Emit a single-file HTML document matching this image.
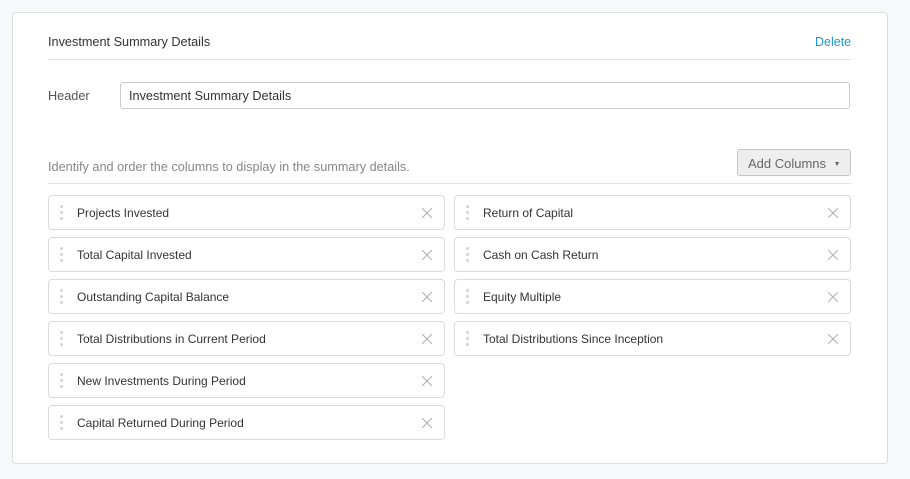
<!DOCTYPE html>
<html><head><style>
*{box-sizing:border-box;margin:0;padding:0}
body{width:910px;height:479px;background:#f7f8fa;font-family:"Liberation Sans",sans-serif;color:#333;position:relative;overflow:hidden}
.card{position:absolute;left:12px;top:12px;width:876px;height:452px;background:#fff;border:1px solid #dcdde0;border-radius:4px}
.a{position:absolute}
.t{font-size:12.7px}
.hr{position:absolute;left:48px;width:803px;height:1px;background:#e3e4e6}
.item{position:absolute;width:397px;height:35px;border:1px solid #d9dadc;border-radius:4px;background:#fff;font-size:12px}
.item span{position:absolute;left:28px;top:10px}
.dots{position:absolute;left:11px;top:9px;width:3px}
.dots i{display:block;width:3px;height:3px;border-radius:50%;background:#d2d3d5;margin-bottom:3px}
.x{position:absolute;right:12px;top:12px;width:10px;height:10px}
</style></head><body>
<div class="card"></div>
<div class="a t" style="left:48px;top:35px">Investment Summary Details</div>
<div class="a t" style="left:815px;top:35px;color:#1a9bd1;font-size:12.5px">Delete</div>
<div class="hr" style="top:59px"></div>
<div class="a t" style="left:48px;top:89px;color:#555">Header</div>
<div class="a" style="left:120px;top:82px;width:730px;height:27px;border:1px solid #c9cacc;border-radius:3px;font-size:12.7px;padding:6px 8px">Investment Summary Details</div>
<div class="a" style="left:48px;top:160px;font-size:12.7px;color:#888">Identify and order the columns to display in the summary details.</div>
<div class="a" style="left:737px;top:149px;width:114px;height:27px;border:1px solid #c4c5c7;border-radius:3px;background:#eeeeef;font-size:13px;color:#666;padding:6px 0 0 10px">Add Columns <span style="font-size:7px;position:relative;top:-2px;margin-left:4px">▼</span></div>
<div class="hr" style="top:183px"></div>

<div class="item" style="left:48px;top:195px"><div class="dots"><i></i><i></i><i></i></div><span>Projects Invested</span><svg class="x" viewBox="0 0 10 10"><path d="M0 0L10 10M10 0L0 10" stroke="#b0b0b0" stroke-width="1"/></svg></div>
<div class="item" style="left:48px;top:237px"><div class="dots"><i></i><i></i><i></i></div><span>Total Capital Invested</span><svg class="x" viewBox="0 0 10 10"><path d="M0 0L10 10M10 0L0 10" stroke="#b0b0b0" stroke-width="1"/></svg></div>
<div class="item" style="left:48px;top:279px"><div class="dots"><i></i><i></i><i></i></div><span>Outstanding Capital Balance</span><svg class="x" viewBox="0 0 10 10"><path d="M0 0L10 10M10 0L0 10" stroke="#b0b0b0" stroke-width="1"/></svg></div>
<div class="item" style="left:48px;top:321px"><div class="dots"><i></i><i></i><i></i></div><span>Total Distributions in Current Period</span><svg class="x" viewBox="0 0 10 10"><path d="M0 0L10 10M10 0L0 10" stroke="#b0b0b0" stroke-width="1"/></svg></div>
<div class="item" style="left:48px;top:363px"><div class="dots"><i></i><i></i><i></i></div><span>New Investments During Period</span><svg class="x" viewBox="0 0 10 10"><path d="M0 0L10 10M10 0L0 10" stroke="#b0b0b0" stroke-width="1"/></svg></div>
<div class="item" style="left:48px;top:405px"><div class="dots"><i></i><i></i><i></i></div><span>Capital Returned During Period</span><svg class="x" viewBox="0 0 10 10"><path d="M0 0L10 10M10 0L0 10" stroke="#b0b0b0" stroke-width="1"/></svg></div>

<div class="item" style="left:454px;top:195px"><div class="dots"><i></i><i></i><i></i></div><span>Return of Capital</span><svg class="x" viewBox="0 0 10 10"><path d="M0 0L10 10M10 0L0 10" stroke="#b0b0b0" stroke-width="1"/></svg></div>
<div class="item" style="left:454px;top:237px"><div class="dots"><i></i><i></i><i></i></div><span>Cash on Cash Return</span><svg class="x" viewBox="0 0 10 10"><path d="M0 0L10 10M10 0L0 10" stroke="#b0b0b0" stroke-width="1"/></svg></div>
<div class="item" style="left:454px;top:279px"><div class="dots"><i></i><i></i><i></i></div><span>Equity Multiple</span><svg class="x" viewBox="0 0 10 10"><path d="M0 0L10 10M10 0L0 10" stroke="#b0b0b0" stroke-width="1"/></svg></div>
<div class="item" style="left:454px;top:321px"><div class="dots"><i></i><i></i><i></i></div><span>Total Distributions Since Inception</span><svg class="x" viewBox="0 0 10 10"><path d="M0 0L10 10M10 0L0 10" stroke="#b0b0b0" stroke-width="1"/></svg></div>
</body></html>
